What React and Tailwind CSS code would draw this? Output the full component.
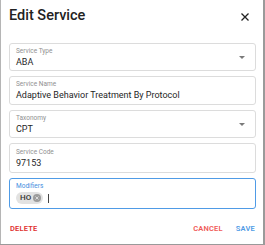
const font = { fontFamily: "Roboto, 'Liberation Sans', sans-serif" };

function Caret() {
  return (
    <svg width="6" height="3" viewBox="0 0 6 3" className="shrink-0">
      <path d="M0 0 L6 0 L3 3 Z" fill="#7a7a7a" />
    </svg>
  );
}

function Field({ label, value, select, h }) {
  return (
    <div className={`flex items-center rounded-[3px] border border-[#dcdcdc] pl-[6px] pr-[10px] ${h}`}>
      <div className="flex min-w-0 flex-1 flex-col">
        <span className="text-[6.5px] leading-[8px] text-[#909090]">{label}</span>
        <span className="mt-[2px] text-[9px] leading-[11px] text-[#262626]">{value}</span>
      </div>
      {select ? <Caret /> : null}
    </div>
  );
}

export default function App() {
  return (
    <div className="h-[245px] w-[265px] bg-[#9a9a9a]" style={font}>
      <div className="flex h-[244px] w-[263px] flex-col border-l border-[#b5b5b5] bg-white">
        <header className="flex h-[43px] items-start justify-between pl-[8px] pr-[14px] pt-[8px]">
          <h2 className="text-[14.5px] font-medium leading-[16px] text-[#222]">Edit Service</h2>
          <svg width="8" height="8" viewBox="0 0 8 8" className="mt-[5px]">
            <path d="M0.5 0.5 L7.5 7.5 M7.5 0.5 L0.5 7.5" stroke="#222" strokeWidth="1.3" />
          </svg>
        </header>

        <div className="flex flex-col gap-[5px] pl-[8px] pr-[7px]">
          <Field label="Service Type" value="ABA" select h="h-[28px]" />
          <Field label="Service Name" value="Adaptive Behavior Treatment By Protocol" h="h-[29px]" />
          <Field label="Taxonomy" value="CPT" select h="h-[28px]" />
          <Field label="Service Code" value="97153" h="h-[30px]" />
          <div className="flex h-[31px] flex-col rounded-[3px] border-[1.5px] border-[#4f9be6] pl-[6px] pt-[3px]">
            <span className="text-[6.5px] leading-[8px] text-[#3f8ee0]">Modifiers</span>
            <div className="mt-[2px] flex items-center gap-[5px]">
              <span className="flex h-[12px] items-center gap-[2px] rounded-full bg-[#e2e2e2] pl-[4px] pr-[2px] text-[8px] font-medium text-[#333]">
                HO
                <span className="flex h-[8px] w-[8px] items-center justify-center rounded-full bg-[#9c9c9c]">
                  <svg width="4" height="4" viewBox="0 0 4 4">
                    <path d="M0.5 0.5 L3.5 3.5 M3.5 0.5 L0.5 3.5" stroke="#e2e2e2" strokeWidth="0.9" />
                  </svg>
                </span>
              </span>
              <span className="h-[9px] w-px bg-[#444]" />
            </div>
          </div>
        </div>

        <footer className="mt-auto flex items-center pb-[10px] pl-[9px] pr-[8px]">
          <span className="text-[7.5px] font-semibold tracking-[0.2px] text-[#e0302e]">DELETE</span>
          <span className="ml-auto text-[7.5px] font-semibold tracking-[0.2px] text-[#f05a57]">CANCEL</span>
          <span className="ml-[13px] text-[7.5px] font-semibold tracking-[0.2px] text-[#4f9be6]">SAVE</span>
        </footer>
      </div>
    </div>
  );
}
